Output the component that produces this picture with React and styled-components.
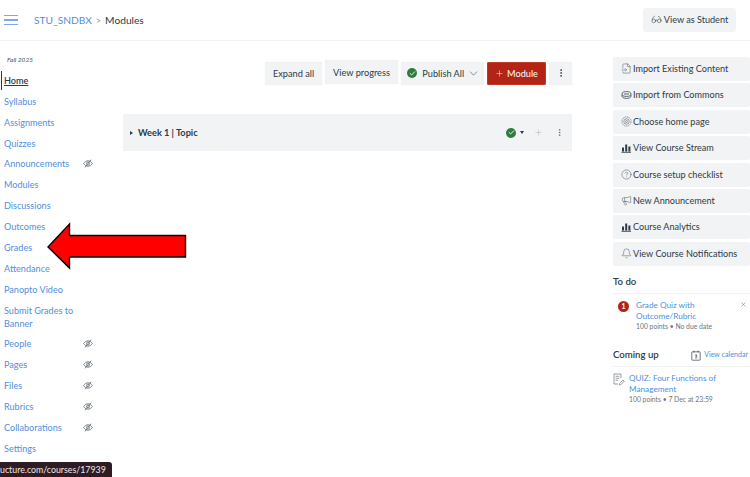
import React from 'react';
import styled, {createGlobalStyle} from 'styled-components';
import {Glasses, FileInput, CircleHelp, Megaphone, Bell, ChevronDown, Plus, Check, X, EllipsisVertical} from 'lucide-react';

const Global=createGlobalStyle`
  html,body{margin:0;padding:0;background:#fff;}
  body{font-family:Lato,"Open Sans",sans-serif;color:#2d3b45;}
  #root{width:750px;height:477px;overflow:hidden;}
`;

const Page=styled.div`
  position:relative;
  width:750px;
  height:477px;
  overflow:hidden;
  display:flex;
  flex-direction:column;
`;

const Header=styled.header`
  height:40px;
  flex:none;
  border-bottom:1px solid #f2f3f4;
  display:flex;
  align-items:center;
  padding:0 14px 0 4px;
`;
const Burger=styled.div`
  width:14px;
  display:flex;
  flex-direction:column;
  gap:3px;
  margin-right:16px;
  span{display:block;height:1.4px;background:#7fa9e4;}
`;
const Crumbs=styled.div`
  flex:1;
  display:flex;
  align-items:center;
  gap:4px;
  font-size:10.2px;
`;
const CrumbLink=styled.span`color:#4f8fe0;`;
const CrumbSep=styled.span`color:#8b969e;font-size:9px;`;
const StudentButton=styled.div`
  width:93px;
  height:24px;
  background:#f2f3f4;
  border-radius:3px;
  display:flex;
  align-items:center;
  justify-content:center;
  gap:2px;
  font-size:9.1px;
  color:#2d3b45;
  margin-top:-1px;
`;

const Body=styled.div`
  flex:1;
  display:flex;
  min-height:0;
`;

const Sidebar=styled.nav`
  width:123px;
  flex:none;
  padding-top:14px;
`;
const Term=styled.div`
  font-size:6.5px;
  font-style:italic;
  color:#4a555d;
  padding-left:7px;
  line-height:9px;
  margin-bottom:6px;
`;
const NavRow=styled.div`
  display:flex;
  align-items:center;
  padding:3.95px 0 3.95px 4px;
  position:relative;
  width:89px;
  justify-content:space-between;
`;
const NavLabel=styled.span`
  font-size:9.1px;
  line-height:13px;
  width:74px;
  color:${p=>p.$active?'#2d3b45':'#4f8fe0'};
  font-weight:${p=>p.$active?600:400};
  text-decoration:${p=>p.$active?'underline':'none'};
`;
const ActiveBar=styled.i`
  position:absolute;
  left:1px;
  top:1px;
  bottom:1px;
  width:1.3px;
  background:#2d3b45;
`;

const Main=styled.main`
  width:449px;
  flex:none;
  padding-top:20px;
`;
const Toolbar=styled.div`
  display:flex;
  justify-content:flex-end;
  align-items:center;
  gap:3px;
  height:24px;
`;
const ToolButton=styled.div`
  height:${p=>p.$h||23}px;
  width:${p=>p.$w}px;
  background:${p=>p.$primary?'#b22418':'#f2f3f4'};
  color:${p=>p.$primary?'#fff':'#2d3b45'};
  border-radius:2px;
  box-shadow:${p=>p.$primary?'0 0 0 1px #c0392b inset':'0 0 1px #d8dcde'};
  font-size:9.2px;
  display:flex;
  align-items:center;
  justify-content:center;
  gap:3px;
  margin-top:${p=>p.$up?-2:0}px;
`;
const PublishButton=styled(ToolButton)`
  justify-content:flex-start;
  padding-left:6px;
  box-sizing:border-box;
`;
const GreenDot=styled.span`
  width:10px;
  height:10px;
  border-radius:50%;
  background:#2f7d3c;
  display:inline-flex;
  align-items:center;
  justify-content:center;
  color:#fff;
`;
const ModuleRow=styled.div`
  margin-top:29px;
  height:37px;
  background:#f2f3f4;
  display:flex;
  align-items:center;
  padding:0 8px 0 7px;
`;
const Caret=styled.span`
  width:0;
  height:0;
  border-left:3px solid #2d3b45;
  border-top:2px solid transparent;
  border-bottom:2px solid transparent;
  margin-right:5px;
`;
const ModuleTitle=styled.span`
  flex:1;
  font-size:9.2px;
  font-weight:700;
  color:#2d3b45;
`;
const SmallDown=styled.span`
  width:0;
  height:0;
  border-top:3px solid #2d3b45;
  border-left:2.5px solid transparent;
  border-right:2.5px solid transparent;
  margin:0 10px 0 4px;
`;

const Aside=styled.aside`
  width:137px;
  margin-left:41px;
  flex:none;
  padding-top:16px;
`;
const SideButton=styled.div`
  height:24px;
  box-sizing:border-box;
  padding:0 0 1px 8px;
  background:#f2f3f4;
  border-radius:2px;
  margin-bottom:2.4px;
  display:flex;
  align-items:center;
  gap:1px;
  font-size:9.1px;
  color:#2d3b45;
  white-space:nowrap;
`;
const SideTitle=styled.div`
  display:flex;
  align-items:center;
  justify-content:space-between;
  font-size:9.6px;
  font-weight:600;
  color:#2d3b45;
  border-bottom:1px solid #f2f3f4;
  padding-bottom:5px;
  margin-top:${p=>p.$top}px;
  line-height:12px;
`;
const CalendarLink=styled.span`
  display:flex;
  align-items:center;
  gap:3px;
  font-size:7.1px;
  font-weight:400;
  color:#4f8fe0;
  padding-right:2px;
`;
const Item=styled.div`
  position:relative;
  display:flex;
  padding:6px 0 0 ${p=>p.$indent}px;
  gap:${p=>p.$gap}px;
`;
const Badge=styled.span`
  width:11px;
  height:11px;
  flex:none;
  border-radius:50%;
  background:#b22418;
  color:#fff;
  font-size:7px;
  font-weight:700;
  display:flex;
  align-items:center;
  justify-content:center;
  margin-top:1px;
`;
const ItemLink=styled.div`
  font-size:8.2px;
  line-height:11px;
  color:#4f8fe0;
`;
const ItemMeta=styled.div`
  font-size:6.8px;
  line-height:9.5px;
  color:#6b757c;
`;
const Dismiss=styled(X)`
  position:absolute;
  right:3px;
  top:7px;
  width:7px;
  height:7px;
  color:#4a555d;
`;

const Arrow=styled.svg`
  position:absolute;
  left:46px;
  top:222px;
`;
const StatusBar=styled.div`
  position:absolute;
  left:0;
  bottom:0;
  width:112px;
  height:15px;
  background:#2e1c24;
  border-top-right-radius:3px;
  color:#f2e9ea;
  font-size:8.8px;
  line-height:15px;
  white-space:nowrap;
`;

const StatsIcon=()=>(
  <svg width="11" height="10" viewBox="0 0 11 10" fill="#2d3b45">
    <rect x="1" y="4.5" width="2" height="4"/>
    <rect x="4.2" y="1.5" width="2" height="7"/>
    <rect x="7.4" y="3.5" width="2" height="5"/>
    <rect x="0.5" y="8.8" width="9.5" height="0.9"/>
  </svg>
);
const CommonsIcon=()=>(
  <svg width="11" height="10" viewBox="0 0 11 10" fill="none" stroke="#4a555d" strokeWidth="0.9">
    <ellipse cx="5.5" cy="4" rx="4.5" ry="2.4"/>
    <path d="M1 5v1.2c0 1.2 2 2.2 4.5 2.2S10 7.4 10 6.2V5"/>
    <path d="M3 4h5"/>
  </svg>
);
const HomeIcon=()=>(
  <svg width="11" height="11" viewBox="0 0 11 11" fill="none" stroke="#6b757c" strokeWidth="0.7">
    <circle cx="5.5" cy="5.5" r="4.6" strokeDasharray="1.6 0.5"/>
    <circle cx="5.5" cy="5.5" r="2.7"/>
    <circle cx="5.5" cy="5.5" r="1"/>
  </svg>
);
const EyeSlash=()=>(
  <svg width="10" height="9" viewBox="0 0 10 9" fill="none" stroke="#6b757c" strokeWidth="0.9">
    <path d="M0.6 4.5C2 2.6 3.4 1.8 5 1.8s3 .8 4.4 2.7C8 6.4 6.6 7.2 5 7.2S2 6.4.6 4.5Z"/>
    <circle cx="5" cy="4.5" r="1.5"/>
    <path d="M2 8.3 8.2.7"/>
  </svg>
);
const CalendarIcon=()=>(
  <svg width="10" height="11" viewBox="0 0 10 11" fill="none" stroke="#4a555d" strokeWidth="0.8">
    <rect x="0.8" y="1.8" width="8.4" height="8.4" rx="0.6"/>
    <path d="M3 .6v2M7 .6v2M3.8 5h2.2L4.8 6.3c1.2-.2 1.5.5 1.2 1.2-.3.6-1.5.6-2 .1"/>
  </svg>
);
const QuizIcon=()=>(
  <svg width="12" height="13" viewBox="0 0 12 13" fill="none" stroke="#6b757c" strokeWidth="0.7" style={{flex:'none'}}>
    <path d="M8 5V1H1v10h4"/>
    <path d="M2.6 3.3h3.8M2.6 5.3h3.8M2.6 7.3h2.4"/>
    <path d="M6.5 10.6 10 7l1.2 1.2L7.7 11.8H6.5Z"/>
  </svg>
);

const nav=[
  {t:'Home',active:true},{t:'Syllabus'},{t:'Assignments'},{t:'Quizzes'},
  {t:'Announcements',hidden:true},{t:'Modules'},{t:'Discussions'},{t:'Outcomes'},
  {t:'Grades'},{t:'Attendance'},{t:'Panopto Video'},{t:'Submit Grades to Banner'},
  {t:'People',hidden:true},{t:'Pages',hidden:true},{t:'Files',hidden:true},
  {t:'Rubrics',hidden:true},{t:'Collaborations',hidden:true},{t:'Settings'},
];

const ic={size:11,strokeWidth:1.1,color:'#4a555d'};
const actions=[
  {t:'Import Existing Content',i:<FileInput {...ic}/>},
  {t:'Import from Commons',i:<CommonsIcon/>},
  {t:'Choose home page',i:<HomeIcon/>},
  {t:'View Course Stream',i:<StatsIcon/>},
  {t:'Course setup checklist',i:<CircleHelp {...ic}/>},
  {t:'New Announcement',i:<Megaphone {...ic}/>},
  {t:'Course Analytics',i:<StatsIcon/>},
  {t:'View Course Notifications',i:<Bell {...ic}/>},
];

export default function App(){
  return (
    <Page>
      <Global/>
      <Header>
        <Burger><span/><span/><span/></Burger>
        <Crumbs>
          <CrumbLink>STU_SNDBX</CrumbLink>
          <CrumbSep>&gt;</CrumbSep>
          <span>Modules</span>
        </Crumbs>
        <StudentButton><Glasses size={11} strokeWidth={1.1}/>View as Student</StudentButton>
      </Header>
      <Body>
        <Sidebar>
          <Term>Fall 2025</Term>
          {nav.map(n=>(
            <NavRow key={n.t}>
              {n.active&&<ActiveBar/>}
              <NavLabel $active={n.active}>{n.t}</NavLabel>
              {n.hidden&&<EyeSlash/>}
            </NavRow>
          ))}
        </Sidebar>
        <Main>
          <Toolbar>
            <ToolButton $w={57}>Expand all</ToolButton>
            <ToolButton $w={73} $h={24} $up>View progress</ToolButton>
            <PublishButton $w={83}>
              <GreenDot><Check size={7} strokeWidth={3}/></GreenDot>
              &nbsp;Publish All
              <ChevronDown size={13} strokeWidth={1} color="#2d3b45"/>
            </PublishButton>
            <ToolButton $w={59} $primary><Plus size={9} strokeWidth={1.3}/>Module</ToolButton>
            <ToolButton $w={23}><EllipsisVertical size={10} strokeWidth={2}/></ToolButton>
          </Toolbar>
          <ModuleRow>
            <Caret/>
            <ModuleTitle>Week 1 | Topic</ModuleTitle>
            <GreenDot><Check size={7} strokeWidth={3}/></GreenDot>
            <SmallDown/>
            <Plus size={9} strokeWidth={1.2} color="#a5adb3"/>
            <EllipsisVertical size={9} strokeWidth={1.6} color="#4a555d" style={{marginLeft:12}}/>
          </ModuleRow>
        </Main>
        <Aside>
          {actions.map(a=>(
            <SideButton key={a.t}>{a.i}{a.t}</SideButton>
          ))}
          <SideTitle $top={10}>To do</SideTitle>
          <Item $indent={5} $gap={7}>
            <Badge>1</Badge>
            <div>
              <ItemLink>Grade Quiz with<br/>Outcome/Rubric</ItemLink>
              <ItemMeta>100 points • No due date</ItemMeta>
            </div>
            <Dismiss strokeWidth={1.5}/>
          </Item>
          <SideTitle $top={18}>
            Coming up
            <CalendarLink><CalendarIcon/>View calendar</CalendarLink>
          </SideTitle>
          <Item $indent={0} $gap={4}>
            <QuizIcon/>
            <div>
              <ItemLink>QUIZ: Four Functions of<br/>Management</ItemLink>
              <ItemMeta>100 points • 7 Dec at 23:59</ItemMeta>
            </div>
          </Item>
        </Aside>
      </Body>
      <Arrow width="142" height="48" viewBox="0 0 142 48">
        <path d="M2 25 L23.5 2 V13.5 H139.5 V35 H23.5 V46 Z" fill="#f00" stroke="#000" strokeWidth="1.4"/>
      </Arrow>
      <StatusBar>ucture.com/courses/17939</StatusBar>
    </Page>
  );
}
